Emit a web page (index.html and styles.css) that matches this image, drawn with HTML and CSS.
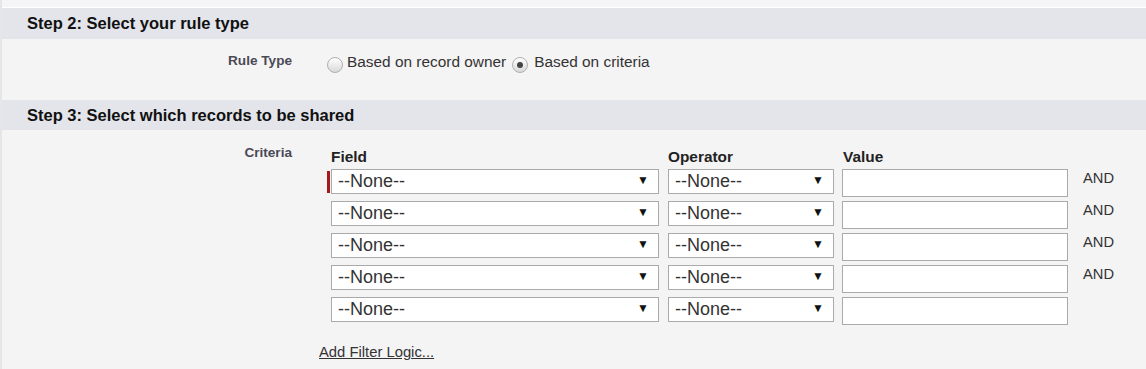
FILE: index.html
```html
<!DOCTYPE html>
<html lang="en">
<head>
  <meta charset="UTF-8" />
  <title>Sharing Rule</title>
  <link rel="stylesheet" href="styles.css">
</head>
<body>
  <div class="page">
    <div class="top-strip"></div>

    <h3 class="step-header">Step 2: Select your rule type</h3>
    <div class="step-body rule-body">
      <div class="field-label">Rule Type</div>
      <div class="radios">
        <label class="radio"><span class="radio-dot"></span>Based on record owner</label>
        <label class="radio"><span class="radio-dot checked"></span>Based on criteria</label>
      </div>
    </div>

    <h3 class="step-header">Step 3: Select which records to be shared</h3>
    <div class="step-body criteria-body">
      <div class="field-label">Criteria</div>
      <div class="criteria">
        <div class="crit-row crit-head">
          <span>Field</span>
          <span>Operator</span>
          <span>Value</span>
          <span></span>
        </div>

        <div class="crit-row">
          <div class="select field-select required"><span>--None--</span><span class="arrow">&#9660;</span></div>
          <div class="select op-select"><span>--None--</span><span class="arrow">&#9660;</span></div>
          <input class="value-input" type="text" />
          <span class="and">AND</span>
        </div>
        <div class="crit-row">
          <div class="select field-select"><span>--None--</span><span class="arrow">&#9660;</span></div>
          <div class="select op-select"><span>--None--</span><span class="arrow">&#9660;</span></div>
          <input class="value-input" type="text" />
          <span class="and">AND</span>
        </div>
        <div class="crit-row">
          <div class="select field-select"><span>--None--</span><span class="arrow">&#9660;</span></div>
          <div class="select op-select"><span>--None--</span><span class="arrow">&#9660;</span></div>
          <input class="value-input" type="text" />
          <span class="and">AND</span>
        </div>
        <div class="crit-row">
          <div class="select field-select"><span>--None--</span><span class="arrow">&#9660;</span></div>
          <div class="select op-select"><span>--None--</span><span class="arrow">&#9660;</span></div>
          <input class="value-input" type="text" />
          <span class="and">AND</span>
        </div>
        <div class="crit-row">
          <div class="select field-select"><span>--None--</span><span class="arrow">&#9660;</span></div>
          <div class="select op-select"><span>--None--</span><span class="arrow">&#9660;</span></div>
          <input class="value-input" type="text" />
          <span></span>
        </div>
      </div>
    </div>
    <div class="filter-logic">
      <a href="#">Add Filter Logic...</a>
    </div>
  </div>
</body>
</html>
```

FILE: styles.css
```css
* {
  box-sizing: border-box;
}

body {
  margin: 0;
  padding: 0;
  font-family: 'Liberation Sans', Arial, sans-serif;
  background: #f5f4f5;
  color: #333;
}

.page {
  border-left: 2px solid #e6e5e7;
  min-height: 369px;
}

.top-strip {
  height: 8px;
  background: #f5f5f7;
  border-bottom: 1px solid #ffffff;
}

.step-header {
  margin: 0;
  height: 31px;
  padding: 0 0 0 25px;
  display: flex;
  align-items: center;
  background: #e3e5eb;
  font-size: 16.5px;
  font-weight: bold;
  color: #111;
}

.step-header + .step-body + .step-header {
  height: 30px;
}

.step-body {
  display: flex;
}

.field-label {
  width: 290px;
  text-align: right;
  font-size: 13.6px;
  font-weight: bold;
  color: #4a4a56;
}

.rule-body {
  height: 61px;
  padding-top: 14px;
}

.radios {
  display: flex;
  margin-left: 35px;
  gap: 6px;
}

.radio {
  display: flex;
  align-items: center;
  font-size: 15.4px;
  color: #333;
  height: 18px;
}

.radio-dot {
  width: 16px;
  height: 16px;
  border: 1px solid #b0b0b0;
  border-radius: 50%;
  background: linear-gradient(#ffffff, #d8d8d8);
  margin-right: 4px;
  margin-top: 5px;
  display: flex;
  align-items: center;
  justify-content: center;
}

.radio-dot.checked::after {
  content: "";
  width: 6px;
  height: 6px;
  border-radius: 50%;
  background: #444;
}

.radio-dot.checked {
  margin-right: 6px;
}

.criteria-body {
  padding-top: 15px;
}

.criteria {
  margin-left: 39px;
  padding-top: 3px;
}

.crit-row {
  display: grid;
  grid-template-columns: 328px 166px 226px auto;
  column-gap: 9px;
  align-items: start;
  height: 26px;
  margin-bottom: 6px;
}

.crit-head {
  height: 18px;
  margin-bottom: 3px;
  font-size: 15.4px;
  font-weight: bold;
  color: #222;
}

.select {
  position: relative;
  display: flex;
  justify-content: space-between;
  align-items: center;
  height: 25px;
  padding: 0 9px 0 6px;
  background: #fff;
  border: 1px solid #aaa;
  font-size: 18px;
  color: #333;
}

.select.required::before {
  content: "";
  position: absolute;
  left: -5px;
  top: 1px;
  width: 3px;
  height: 22px;
  background: #a5191b;
}

.select .arrow {
  font-size: 12px;
  color: #111;
  margin-top: -3px;
}

.value-input {
  height: 28px;
  width: 226px;
  margin-left: -1px;
  border: 1px solid #aaa;
  background: #fff;
  padding: 0 6px;
}

.and {
  font-size: 14.7px;
  color: #333;
  padding-left: 5px;
  margin-top: 1px;
}

.filter-logic {
  padding: 14px 0 0 317px;
}

.filter-logic a {
  font-size: 14.8px;
  color: #333;
  text-decoration: underline;
}
```
